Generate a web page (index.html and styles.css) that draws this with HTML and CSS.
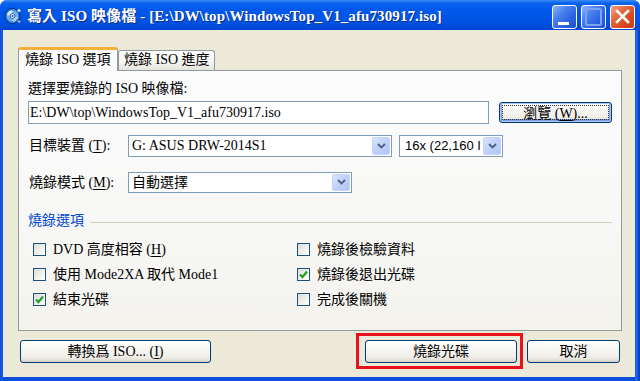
FILE: index.html
```html
<!DOCTYPE html>
<html lang="zh-Hant">
<head>
<meta charset="utf-8">
<title>寫入 ISO 映像檔</title>
<link rel="stylesheet" href="styles.css">
</head>
<body>
<div class="window">
  <div class="titlebar">
    <svg class="app-icon" width="18" height="18" viewBox="0 0 18 18">
      <circle cx="8.5" cy="9" r="7.6" fill="#2f78dc" stroke="#0b2f78" stroke-width="1"/>
      <circle cx="8.5" cy="9" r="5.8" fill="#6fb4f2"/>
      <path d="M3 8 A5.8 5.8 0 0 1 8 3.2 L8.5 9 Z" fill="#d8eeff"/>
      <path d="M14 10 A5.8 5.8 0 0 1 9 14.8 L8.5 9 Z" fill="#a9d4fa"/>
      <circle cx="8.5" cy="9" r="2.5" fill="#eaf6ff" stroke="#1a4c9c" stroke-width="0.9"/>
      <circle cx="8.5" cy="9" r="1" fill="#1a4c9c"/>
      <path d="M12 13 l3.5 3 l1.3-1.8 z" fill="#ffffff" stroke="#1a4c9c" stroke-width="0.5"/>
      <circle cx="15" cy="3.5" r="1.6" fill="#ffffff" stroke="#3a70c8" stroke-width="0.6"/>
    </svg>
    <div class="title">寫入 ISO 映像檔 - [E:\DW\top\WindowsTop_V1_afu730917.iso]</div>
    <div class="caption-btns">
      <div class="cbtn min"><span class="min-bar"></span></div>
      <div class="cbtn max"><span class="max-box"></span></div>
      <div class="cbtn close">
        <svg width="25" height="24" viewBox="0 0 25 24">
          <path d="M7 6 L18 17 M18 6 L7 17" stroke="#ffffff" stroke-width="2.6" stroke-linecap="square"/>
        </svg>
      </div>
    </div>
  </div>

  <div class="client">
    <div class="tabs">
      <div class="tab active">燒錄 ISO 選項</div>
      <div class="tab">燒錄 ISO 進度</div>
    </div>
    <div class="panel">
      <div class="label">選擇要燒錄的 ISO 映像檔:</div>
      <div class="file-row">
        <div class="textbox">E:\DW\top\WindowsTop_V1_afu730917.iso</div>
        <div class="btn browse"><span class="focus">瀏覽 (<u>W</u>)...</span></div>
      </div>
      <div class="field-row">
        <span class="flabel">目標裝置 (<u>T</u>):</span>
        <div class="combo device">
          <span class="combo-text">G: ASUS DRW-2014S1</span>
          <span class="drop"><svg width="9" height="6" viewBox="0 0 9 6"><path d="M1 1 L4.5 4.5 L8 1" fill="none" stroke="#4d6185" stroke-width="1.8"/></svg></span>
        </div>
        <div class="combo speed">
          <span class="combo-text sans">16x (22,160 I</span>
          <span class="drop"><svg width="9" height="6" viewBox="0 0 9 6"><path d="M1 1 L4.5 4.5 L8 1" fill="none" stroke="#4d6185" stroke-width="1.8"/></svg></span>
        </div>
      </div>
      <div class="field-row mode-row">
        <span class="flabel">燒錄模式 (<u>M</u>):</span>
        <div class="combo mode">
          <span class="combo-text">自動選擇</span>
          <span class="drop"><svg width="9" height="6" viewBox="0 0 9 6"><path d="M1 1 L4.5 4.5 L8 1" fill="none" stroke="#4d6185" stroke-width="1.8"/></svg></span>
        </div>
      </div>
      <div class="group-head"><span class="group-title">燒錄選項</span><span class="rule"></span></div>
      <div class="checks">
        <div class="check"><span class="box"></span><span>DVD 高度相容 (<u>H</u>)</span></div>
        <div class="check"><span class="box"></span><span>燒錄後檢驗資料</span></div>
        <div class="check"><span class="box"></span><span>使用 Mode2XA 取代 Mode1</span></div>
        <div class="check"><span class="box checked"><svg width="11" height="11" viewBox="0 0 11 11"><path d="M2 5.5 L4.5 8 L9 2.5" fill="none" stroke="#21a121" stroke-width="2.2"/></svg></span><span>燒錄後退出光碟</span></div>
        <div class="check"><span class="box checked"><svg width="11" height="11" viewBox="0 0 11 11"><path d="M2 5.5 L4.5 8 L9 2.5" fill="none" stroke="#21a121" stroke-width="2.2"/></svg></span><span>結束光碟</span></div>
        <div class="check"><span class="box"></span><span>完成後關機</span></div>
      </div>
    </div>
    <div class="actions">
      <div class="btn convert">轉換爲 ISO... (<u>I</u>)</div>
      <div class="action-right">
        <div class="highlight"><div class="btn burn">燒錄光碟</div></div>
        <div class="btn cancel">取消</div>
      </div>
    </div>
  </div>
</div>
</body>
</html>
```

FILE: styles.css
```css
* { box-sizing: border-box; }

html, body {
  margin: 0;
  padding: 0;
  background: #ffffff;
}

body {
  width: 640px;
  height: 381px;
  overflow: hidden;
  font-family: "Liberation Serif", "Noto Sans CJK TC", serif;
  font-size: 14px;
  color: #000000;
}

u { text-decoration: underline; text-underline-offset: 2px; }

.window {
  width: 640px;
  height: 381px;
  display: flex;
  flex-direction: column;
  background: linear-gradient(to right, #0a3fc8 0, #1660e8 1px, #0a50dd 3px, #0a50dd 635px, #2b6ff0 636px, #0a4fdc 638px, #0638b8 640px);
  border-radius: 7px 7px 0 0;
  overflow: hidden;
}

/* Title bar */
.titlebar {
  height: 30px;
  flex: none;
  display: flex;
  align-items: center;
  padding: 0 5px 0 4px;
  background: linear-gradient(to bottom, #3c8cf8 0, #0a63ec 3px, #0059ea 9px, #0056e6 18px, #004fdf 25px, #0043d3 30px);
}

.app-icon { flex: none; width: 18px; height: 18px; margin-top: 1px; }

.title {
  flex: 1;
  margin-left: 5px;
  color: #ffffff;
  font-weight: bold;
  font-size: 15px;
  line-height: 18px;
  white-space: nowrap;
  text-shadow: 1px 1px 0 #0b2a8a;
  letter-spacing: 0.1px;
  padding-top: 1px;
}

.caption-btns {
  display: flex;
  gap: 4px;
  align-self: flex-start;
  margin-top: 5px;
}

.cbtn {
  width: 25px;
  height: 24px;
  border: 1px solid #ffffff;
  border-radius: 3px;
  position: relative;
  background: linear-gradient(135deg, #8fb4fa 0, #4a80ee 35%, #2a60e0 70%, #1f50d0 100%);
}

.min-bar {
  position: absolute;
  left: 5px;
  top: 16px;
  width: 11px;
  height: 3px;
  background: #ffffff;
}

.max-box {
  position: absolute;
  left: 3px;
  top: 2px;
  width: 17px;
  height: 18px;
  border: 2px solid #7aa2ee;
  border-radius: 2px;
}

.close {
  background: linear-gradient(135deg, #f3a58a 0, #e5693f 35%, #d9481c 70%, #c83a12 100%);
}

.close svg { position: absolute; left: -1px; top: -1px; }

/* Client area */
.client {
  flex: 1;
  margin: 0 5px 4px 3px;
  background: #ece9d8;
  padding: 17px 13px 0 15px;
  display: flex;
  flex-direction: column;
}

.tabs {
  display: flex;
  align-items: flex-end;
  height: 23px;
  position: relative;
  z-index: 1;
}

.tab {
  height: 20px;
  width: 97px;
  border: 1px solid #919b9c;
  border-bottom: none;
  border-radius: 3px 3px 0 0;
  padding: 0 0 0 5px;
  line-height: 18px;
  white-space: nowrap;
  background: linear-gradient(to bottom, #ffffff, #f5f5f1 60%, #e5e4dc);
}

.tab.active {
  width: 100px;
  height: 24px;
  margin-bottom: -1px;
  padding-left: 6px;
  line-height: 19px;
  border-top: 3px solid #f7b13a;
  background: #fbfbfc;
}

.panel {
  height: 261px;
  border: 1px solid #919b9c;
  background: linear-gradient(to bottom, #fcfcfe 0, #f9f9f8 40%, #f4f3ee 100%);
  padding: 9px 9px 0 9px;
  display: flex;
  flex-direction: column;
}

.label {
  height: 17px;
  line-height: 17px;
  white-space: nowrap;
}

.file-row {
  margin-top: 4px;
  height: 23px;
  display: flex;
  align-items: center;
  gap: 10px;
}

.textbox {
  width: 461px;
  height: 23px;
  border: 1px solid #7f9db9;
  background: #ffffff;
  padding-left: 1px;
  line-height: 21px;
  white-space: nowrap;
  overflow: hidden;
}

.btn {
  height: 23px;
  border: 1px solid #003c74;
  border-radius: 3px;
  background: linear-gradient(to bottom, #ffffff 0, #f6f5f1 45%, #edece6 80%, #d8d2c6 100%);
  text-align: center;
  line-height: 21px;
  white-space: nowrap;
}

.browse {
  width: 113px;
  height: 21px;
  line-height: 15px;
  padding: 2px;
  box-shadow: inset 0 0 0 1px #adc6f0, inset 0 -1px 0 2px #7ea1e8;
}

.browse .focus {
  display: block;
  height: 15px;
  border: 1px dotted #333333;
}

.field-row {
  margin-top: 10px;
  height: 23px;
  display: flex;
  align-items: center;
}

.mode-row {
  margin-top: 14px;
  height: 22px;
}

.flabel {
  width: 100px;
  padding-left: 1px;
  white-space: nowrap;
  line-height: 17px;
}

.combo {
  height: 22px;
  border: 1px solid #7f9db9;
  background: #ffffff;
  display: flex;
  align-items: stretch;
  padding: 1px;
}

.combo-text {
  flex: 1;
  padding-left: 2px;
  line-height: 18px;
  white-space: nowrap;
  overflow: hidden;
}

.combo-text.sans {
  font-family: "Liberation Sans", "Noto Sans CJK TC", sans-serif;
  font-size: 13px;
  padding-left: 4px;
}

.drop {
  width: 18px;
  flex: none;
  border: 1px solid #c3d3fd;
  border-radius: 2px;
  background: linear-gradient(135deg, #dce6fd 0, #c1d3fb 45%, #b0c5f6 100%);
  display: flex;
  align-items: center;
  justify-content: center;
}

.device { width: 264px; }
.speed { width: 104px; margin-left: 7px; }
.mode { width: 224px; height: 21px; }

.group-head {
  margin-top: 19px;
  height: 18px;
  display: flex;
  align-items: center;
}

.group-title {
  color: #0046d5;
  line-height: 18px;
  white-space: nowrap;
}

.rule {
  flex: 1;
  height: 1px;
  margin-left: 6px;
  margin-top: 2px;
  background: #d0d0bf;
}

.checks {
  margin-top: 7px;
  padding-left: 5px;
  display: grid;
  grid-template-columns: 264px 1fr;
  grid-auto-rows: 25px;
}

.check {
  display: flex;
  align-items: center;
  gap: 7px;
  white-space: nowrap;
  line-height: 17px;
}

.box {
  width: 13px;
  height: 13px;
  flex: none;
  border: 1px solid #1c5180;
  background: linear-gradient(135deg, #dcdcd7 0, #f0f0ec 55%, #ffffff 100%);
  display: flex;
  align-items: center;
  justify-content: center;
}

.actions {
  margin-top: 2px;
  height: 36px;
  display: flex;
  align-items: center;
  justify-content: space-between;
  padding: 0 2px 0 2px;
}

.convert { width: 191px; }

.action-right {
  display: flex;
  align-items: center;
  gap: 4px;
}

.highlight {
  border: 3px solid #e8121c;
  padding: 4px 3px 3px 6px;
}

.burn { width: 152px; }
.cancel { width: 93px; }
```
